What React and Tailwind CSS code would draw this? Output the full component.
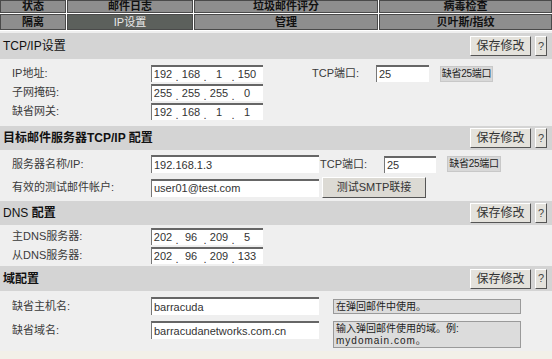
import React from 'react';

const tabsTop = ['状态', '邮件日志', '垃圾邮件评分', '病毒检查'];
const tabsBottom = ['隔离', 'IP设置', '管理', '贝叶斯/指纹'];

const Tab = ({ label, active }) => (
  <div
    className={
      'flex items-center justify-center border border-[#4a4a4a] text-[11px] font-bold leading-none ' +
      (active ? 'bg-[#5c605c] text-[#e8e8e8] font-normal' : 'bg-[#8e8e8e] text-[#111]')
    }
  >
    {label}
  </div>
);

const SaveButtons = () => (
  <div className="flex items-center gap-[4px]">
    <button className="h-[20px] w-[61px] bg-[#e4e2dc] border border-t-white border-l-white border-r-[#555] border-b-[#555] text-[12px] text-[#333] leading-none">
      保存修改
    </button>
    <button className="h-[20px] w-[12px] bg-[#e4e2dc] border border-t-white border-l-white border-r-[#555] border-b-[#555] text-[11px] text-[#444] leading-none">
      ?
    </button>
  </div>
);

const Header = ({ children, h }) => (
  <div className={'flex items-center justify-between bg-[#d4d4d4] pl-[3px] pr-[5px] ' + h}>
    <div className="text-[12px] text-[#111] leading-none">{children}</div>
    <SaveButtons />
  </div>
);

const Label = ({ children }) => (
  <div className="w-[151px] shrink-0 pl-[12px] text-[11px] text-[#3a3a3a] leading-none">{children}</div>
);

const TextInput = ({ value, w = 'w-[168px]', h = 'h-[18px]' }) => (
  <div
    className={
      'flex items-center bg-white border-t-2 border-l border-t-[#666] border-l-[#777] pl-[2px] text-[11px] text-[#333] leading-none ' +
      w + ' ' + h
    }
  >
    {value}
  </div>
);

const IpInput = ({ parts }) => (
  <div className="flex items-center h-[17px] w-[112px] bg-white border-t-2 border-l border-t-[#666] border-l-[#777] text-[11px] text-[#333] leading-none">
    {parts.map((p, i) => (
      <React.Fragment key={i}>
        <span className="w-[22px] text-center">{p}</span>
        {i < 3 && <span className="w-[6px] text-center translate-y-[3px]">.</span>}
      </React.Fragment>
    ))}
  </div>
);

const SmallButton = ({ children, w }) => (
  <div className={'flex items-center justify-center whitespace-nowrap h-[16px] bg-[#d8d8d8] border border-[#c8c8c8] text-[10px] tracking-[-0.3px] text-[#222] leading-none ' + w}>
    {children}
  </div>
);

const HelpBox = ({ children, h }) => (
  <div className={'w-[188px] bg-[#dcdcdc] border border-[#9a9a9a] px-[2px] pt-[1px] text-[10px] text-[#222] leading-[12px] ' + h}>
    {children}
  </div>
);

export default function App() {
  return (
    <div
      className="w-[552px] h-[359px] overflow-hidden bg-[#efefef] flex flex-col"
      style={{ fontFamily: '"Liberation Sans", "Noto Sans CJK SC", sans-serif' }}
    >
      <div className="bg-white grid grid-cols-[66px_126px_184px_1fr] grid-rows-[13px_16px] gap-x-[1px] gap-y-[1px] pb-[1px]">
        {tabsTop.map((t) => (
          <Tab key={t} label={t} />
        ))}
        {tabsBottom.map((t) => (
          <Tab key={t} label={t} active={t === 'IP设置'} />
        ))}
      </div>
      <div className="h-[2px] bg-[#efefef]" />

      <Header h="h-[26px]">TCP/IP设置</Header>
      <div className="h-[67px] pt-[6px] flex flex-col gap-[2px]">
        <div className="flex items-center">
          <Label>IP地址:</Label>
          <IpInput parts={['192', '168', '1', '150']} />
          <div className="ml-[49px] w-[64px] text-[11px] text-[#3a3a3a] leading-none">TCP端口:</div>
          <TextInput value="25" w="w-[53px]" h="h-[17px]" />
          <div className="ml-[11px]">
            <SmallButton w="w-[53px]">缺省25端口</SmallButton>
          </div>
        </div>
        <div className="flex items-center">
          <Label>子网掩码:</Label>
          <IpInput parts={['255', '255', '255', '0']} />
        </div>
        <div className="flex items-center">
          <Label>缺省网关:</Label>
          <IpInput parts={['192', '168', '1', '1']} />
        </div>
      </div>

      <Header h="h-[24px]">
        <span className="font-bold">目标邮件服务器TCP/IP 配置</span>
      </Header>
      <div className="h-[51px] pt-[5px] flex flex-col gap-[4px]">
        <div className="flex items-center">
          <Label>服务器名称/IP:</Label>
          <TextInput value="192.168.1.3" />
          <div className="ml-[1px] w-[64px] text-[11px] text-[#3a3a3a] leading-none">TCP端口:</div>
          <TextInput value="25" w="w-[52px]" h="h-[17px]" />
          <div className="ml-[11px]">
            <SmallButton w="w-[54px]">缺省25端口</SmallButton>
          </div>
        </div>
        <div className="flex items-center">
          <Label>有效的测试邮件帐户:</Label>
          <TextInput value="user01@test.com" />
          <button className="ml-[3px] h-[21px] w-[104px] bg-[#dcdad4] border border-t-white border-l-white border-r-[#555] border-b-[#555] text-[11px] text-[#333] leading-none">
            测试SMTP联接
          </button>
        </div>
      </div>

      <Header h="h-[24px]">
        DNS <span className="font-bold">配置</span>
      </Header>
      <div className="h-[41px] pt-[3px] flex flex-col gap-[2px]">
        <div className="flex items-center">
          <Label>主DNS服务器:</Label>
          <IpInput parts={['202', '96', '209', '5']} />
        </div>
        <div className="flex items-center">
          <Label>从DNS服务器:</Label>
          <IpInput parts={['202', '96', '209', '133']} />
        </div>
      </div>

      <Header h="h-[25px]">
        <span className="font-bold">域配置</span>
      </Header>
      <div className="h-[60px] pt-[6px] flex flex-col gap-[6px]">
        <div className="flex items-center">
          <Label>缺省主机名:</Label>
          <TextInput value="barracuda" />
          <div className="ml-[14px]">
            <HelpBox h="h-[15px]">在弹回邮件中使用。</HelpBox>
          </div>
        </div>
        <div className="flex items-start">
          <div className="h-[18px] flex items-center">
            <Label>缺省域名:</Label>
          </div>
          <TextInput value="barracudanetworks.com.cn" />
          <div className="ml-[14px]">
            <HelpBox h="h-[27px]">
              输入弹回邮件使用的域。例:
              <br />
              <span className="tracking-[1px]">mydomain.com。</span>
            </HelpBox>
          </div>
        </div>
      </div>
      <div className="flex-1 bg-[#f2f0e8]" />
    </div>
  );
}
